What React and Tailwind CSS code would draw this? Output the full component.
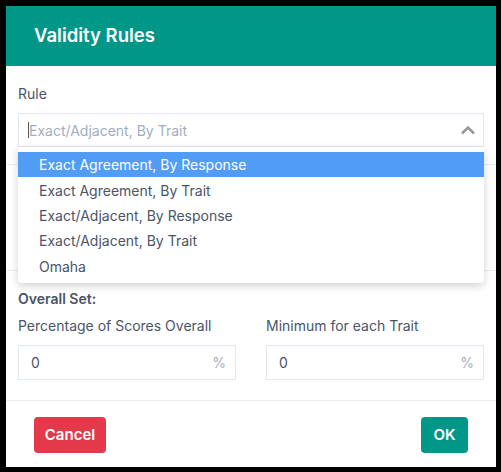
import React from 'react';

const OPTIONS = [
  'Exact Agreement, By Response',
  'Exact Agreement, By Trait',
  'Exact/Adjacent, By Response',
  'Exact/Adjacent, By Trait',
  'Omaha',
];

function PercentInput({ label }) {
  return (
    <div className="flex-1">
      <div className="text-[14px] leading-[20px] text-[#4a5568]">{label}</div>
      <div className="mt-[9px] h-[35px] border border-[#e2e8f0] flex items-center justify-between pl-[12px] pr-[9px]">
        <span className="text-[14px] text-[#4a5568]">0</span>
        <span className="text-[14px] text-[#a0aec0]">%</span>
      </div>
    </div>
  );
}

export default function App() {
  return (
    <div className="w-[501px] h-[472px] bg-black pt-[6px] pl-[6px]" style={{ fontFamily: 'Inter, "Noto Sans", sans-serif' }}>
      <div className="w-[490px] h-[461px] bg-white flex flex-col">
        <div className="h-[60px] shrink-0 bg-[#009688] flex items-center px-[28px]">
          <h2 className="text-white text-[18.5px] font-semibold">Validity Rules</h2>
        </div>

        <div className="px-[12px] pt-[18px] flex-1">
          <div className="text-[14px] leading-[20px] text-[#4a5568]">Rule</div>
          <div className="relative mt-[9px]">
            <div className="h-[34px] border border-[#e2e8f0] flex items-center pl-[9px] pr-[6px]">
              <span className="w-px h-[16px] bg-[#555]" />
              <span className="text-[14px] text-[#a0aec0] flex-1">Exact/Adjacent, By Trait</span>
              <svg width="16" height="10" viewBox="0 0 16 10" className="mr-[1px]">
                <polyline points="2,8.5 8,2.5 14,8.5" fill="none" stroke="#9a9a9a" strokeWidth="2.6" />
              </svg>
            </div>
            <ul className="absolute left-0 right-0 top-full z-10 bg-white rounded-b-[4px] pt-[5px] pb-[4px] shadow-[0_3px_8px_rgba(0,0,0,0.18)]">
              {OPTIONS.map((o, i) => (
                <li
                  key={o}
                  className={`h-[25.4px] flex items-center pl-[21px] text-[14px] ${i === 0 ? 'bg-[#519cf4] text-white' : 'text-[#4a5568]'}`}
                >
                  {o}
                </li>
              ))}
            </ul>
          </div>

          <div className="-mx-[12px] mt-[17px] h-[107px] border-t border-b border-[#e9edf2]" />

          <div className="mt-[18px] text-[14px] leading-[20px] font-semibold text-[#4a5568]">Overall Set:</div>
          <div className="mt-[7px] flex gap-[30px]">
            <PercentInput label="Percentage of Scores Overall" />
            <PercentInput label="Minimum for each Trait" />
          </div>
        </div>

        <div className="h-[67px] shrink-0 border-t border-[#e9edf2] flex items-start justify-between px-[28px] pt-[16px]">
          <button className="h-[36px] w-[72px] rounded-[4px] bg-[#e3394b] text-white text-[15px] font-semibold">Cancel</button>
          <button className="h-[36px] w-[47px] rounded-[4px] bg-[#009688] text-white text-[15px] font-semibold">OK</button>
        </div>
      </div>
    </div>
  );
}
